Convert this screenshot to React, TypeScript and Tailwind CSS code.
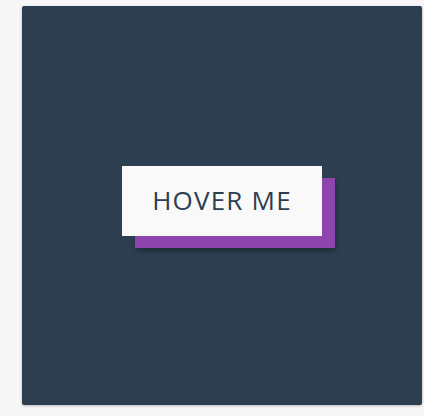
export default function App() {
  return (
    <div className="min-h-[416px] bg-[#f7f7f7] pl-[22px] pt-[6px]">
      <div className="w-[400px] h-[399px] rounded-[2px] bg-[#2c3e50] shadow-[0_1px_3px_rgba(0,0,0,0.25)] flex items-center justify-center pb-[10px]">
        <button className="w-[200px] h-[70px] bg-[#f9f9f9] text-[#2c3e50] text-[26px] tracking-[1.2px] shadow-[13px_12px_0_#8e44ad,14px_15px_4px_rgba(0,0,0,0.3)] font-['Open_Sans',sans-serif] flex items-center justify-center">
          HOVER ME
        </button>
      </div>
    </div>
  );
}
